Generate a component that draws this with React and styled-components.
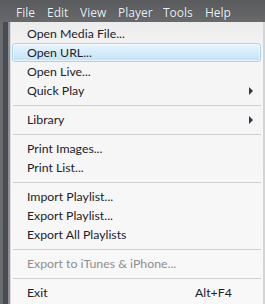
import React from "react";
import styled, { createGlobalStyle } from "styled-components";

const Global = createGlobalStyle`
  html, body { margin: 0; padding: 0; background: #5f6062; }
  #root { width: 265px; height: 304px; }
`;

const Window = styled.div`
  width: 265px;
  height: 304px;
  overflow: hidden;
  display: flex;
  flex-direction: column;
  background: #5f6062;
  font-family: Lato, "Open Sans", sans-serif;
  font-size: 12.3px;
`;

const MenuBar = styled.div`
  height: 22px;
  box-sizing: border-box;
  flex: none;
  display: flex;
  align-items: center;
  padding: 3px 0 0 16px;
  background: linear-gradient(#5a5b5d, #68696b);
  color: #eef3fa;
  font-family: "Open Sans", sans-serif;
  font-size: 12px;
  text-shadow: 0 0 1px rgba(0, 0, 0, 0.4);
`;

const BarItem = styled.span`
  width: ${(p) => p.$w}px;
  flex: none;
`;

const Body = styled.div`
  flex: 1;
  display: flex;
  min-height: 0;
`;

const Strip = styled.div`
  width: 10px;
  flex: none;
  display: flex;
  background: #6b6c6e;
  & > div {
    margin-left: 3px;
    width: 5px;
    background: #474b52;
  }
  & > span {
    width: 2px;
    background: #8e9096;
  }
`;

const Panel = styled.div`
  flex: 1;
  padding: 2px 2px 0 2px;
  background: linear-gradient(#ececec, #f5f5f5 30px, #f8f8f9);
  border-right: 2px solid #d4d4d4;
  box-shadow: inset 1px 0 0 #dcdcdc;
`;

const Item = styled.div`
  height: 19px;
  box-sizing: border-box;
  display: flex;
  align-items: center;
  padding: 0 5px 0 14px;
  color: ${(p) => (p.$disabled ? "#8e8e8e" : "#1d2129")};
  border: 1px solid transparent;
  border-radius: 3px;
  ${(p) =>
    p.$active &&
    `
    border-color: #a9d3ec;
    background: linear-gradient(#eaf5fd, #d2ebf9 55%, #c2e2f5);
    box-shadow: inset 0 0 0 1px rgba(255,255,255,0.6);
  `}
`;

const Label = styled.span`
  flex: 1;
  white-space: nowrap;
`;

const Shortcut = styled.span`
  width: 60px;
  flex: none;
`;

const Arrow = styled.span`
  width: 0;
  height: 0;
  border-top: 4px solid transparent;
  border-bottom: 4px solid transparent;
  border-left: 4px solid #2f3846;
  margin-right: 2px;
`;

const Separator = styled.div`
  height: 10px;
  display: flex;
  align-items: center;
  padding: 0 0 0 1px;
  &::after {
    content: "";
    flex: 1;
    height: 1px;
    background: #cfcfcf;
  }
`;

const bar = [
  ["File", 31],
  ["Edit", 33],
  ["View", 38],
  ["Player", 45],
  ["Tools", 42],
  ["Help", 40],
];

const menu = [
  { label: "Open Media File..." },
  { label: "Open URL...", active: true },
  { label: "Open Live..." },
  { label: "Quick Play", sub: true },
  { sep: true },
  { label: "Library", sub: true },
  { sep: true },
  { label: "Print Images..." },
  { label: "Print List..." },
  { sep: true },
  { label: "Import Playlist..." },
  { label: "Export Playlist..." },
  { label: "Export All Playlists" },
  { sep: true },
  { label: "Export to iTunes & iPhone...", disabled: true },
  { sep: true },
  { label: "Exit", shortcut: "Alt+F4" },
];

export default function App() {
  return (
    <>
      <Global />
      <Window>
        <MenuBar>
          {bar.map(([t, w]) => (
            <BarItem key={t} $w={w}>
              {t}
            </BarItem>
          ))}
        </MenuBar>
        <Body>
          <Strip>
            <div />
            <span />
          </Strip>
          <Panel>
            {menu.map((m, i) =>
              m.sep ? (
                <Separator key={i} />
              ) : (
                <Item key={i} $active={m.active} $disabled={m.disabled}>
                  <Label>{m.label}</Label>
                  {m.shortcut && <Shortcut>{m.shortcut}</Shortcut>}
                  {m.sub && <Arrow />}
                </Item>
              )
            )}
          </Panel>
        </Body>
      </Window>
    </>
  );
}
